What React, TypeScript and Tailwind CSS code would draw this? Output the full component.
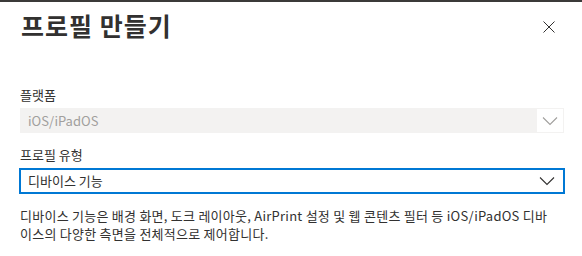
import React from "react";

function Chevron({ color }: { color: string }) {
  return (
    <svg width="16" height="10" viewBox="0 0 16 10" fill="none">
      <path d="M1 1.5 L8 8.5 L15 1.5" stroke={color} strokeWidth="1.1" />
    </svg>
  );
}

export default function App() {
  return (
    <div className="w-[582px] h-[256px] bg-white overflow-hidden text-[#323130] font-['Noto_Sans_CJK_KR',sans-serif]">
      <div className="h-[2px] bg-[#3b3a39]" />
      <div className="flex items-start justify-between pl-[21px] pr-[27px] pt-[7px]">
        <h1 className="text-[25px] leading-[32px] font-bold tracking-[1px] text-[#323130]">프로필 만들기</h1>
        <button className="mt-[12px] w-[12px] h-[12px]">
          <svg width="12" height="12" viewBox="0 0 12 12">
            <path d="M0.5 0.5 L11.5 11.5 M11.5 0.5 L0.5 11.5" stroke="#323130" strokeWidth="1" />
          </svg>
        </button>
      </div>
      <div className="pl-[20px] pr-[18px] pt-[45px] text-[13px]">
        <div className="leading-[18px] mb-[4px]">플랫폼</div>
        <div className="h-[25px] bg-[#f3f2f1] flex items-center justify-between pl-[8px] pr-[1px]">
          <span className="text-[#a19f9d]">iOS/iPadOS</span>
          <div className="w-[26px] h-[23px] bg-white flex items-center justify-center">
            <Chevron color="#a19f9d" />
          </div>
        </div>
        <div className="leading-[18px] mt-[13px] mb-[4px]">프로필 유형</div>
        <div className="h-[26px] -ml-[1px] -mr-[1px] border-2 border-[#0078d4] flex items-center justify-between pl-[7px] pr-[8px]">
          <span>디바이스 기능</span>
          <Chevron color="#323130" />
        </div>
        <p className="mt-[13px] leading-[18px] tracking-[0.25px] pr-[6px]">
          디바이스 기능은 배경 화면, 도크 레이아웃, AirPrint 설정 및 웹 콘텐츠 필터 등 iOS/iPadOS 디바이스의 다양한 측면을 전체적으로 제어합니다.
        </p>
      </div>
    </div>
  );
}
